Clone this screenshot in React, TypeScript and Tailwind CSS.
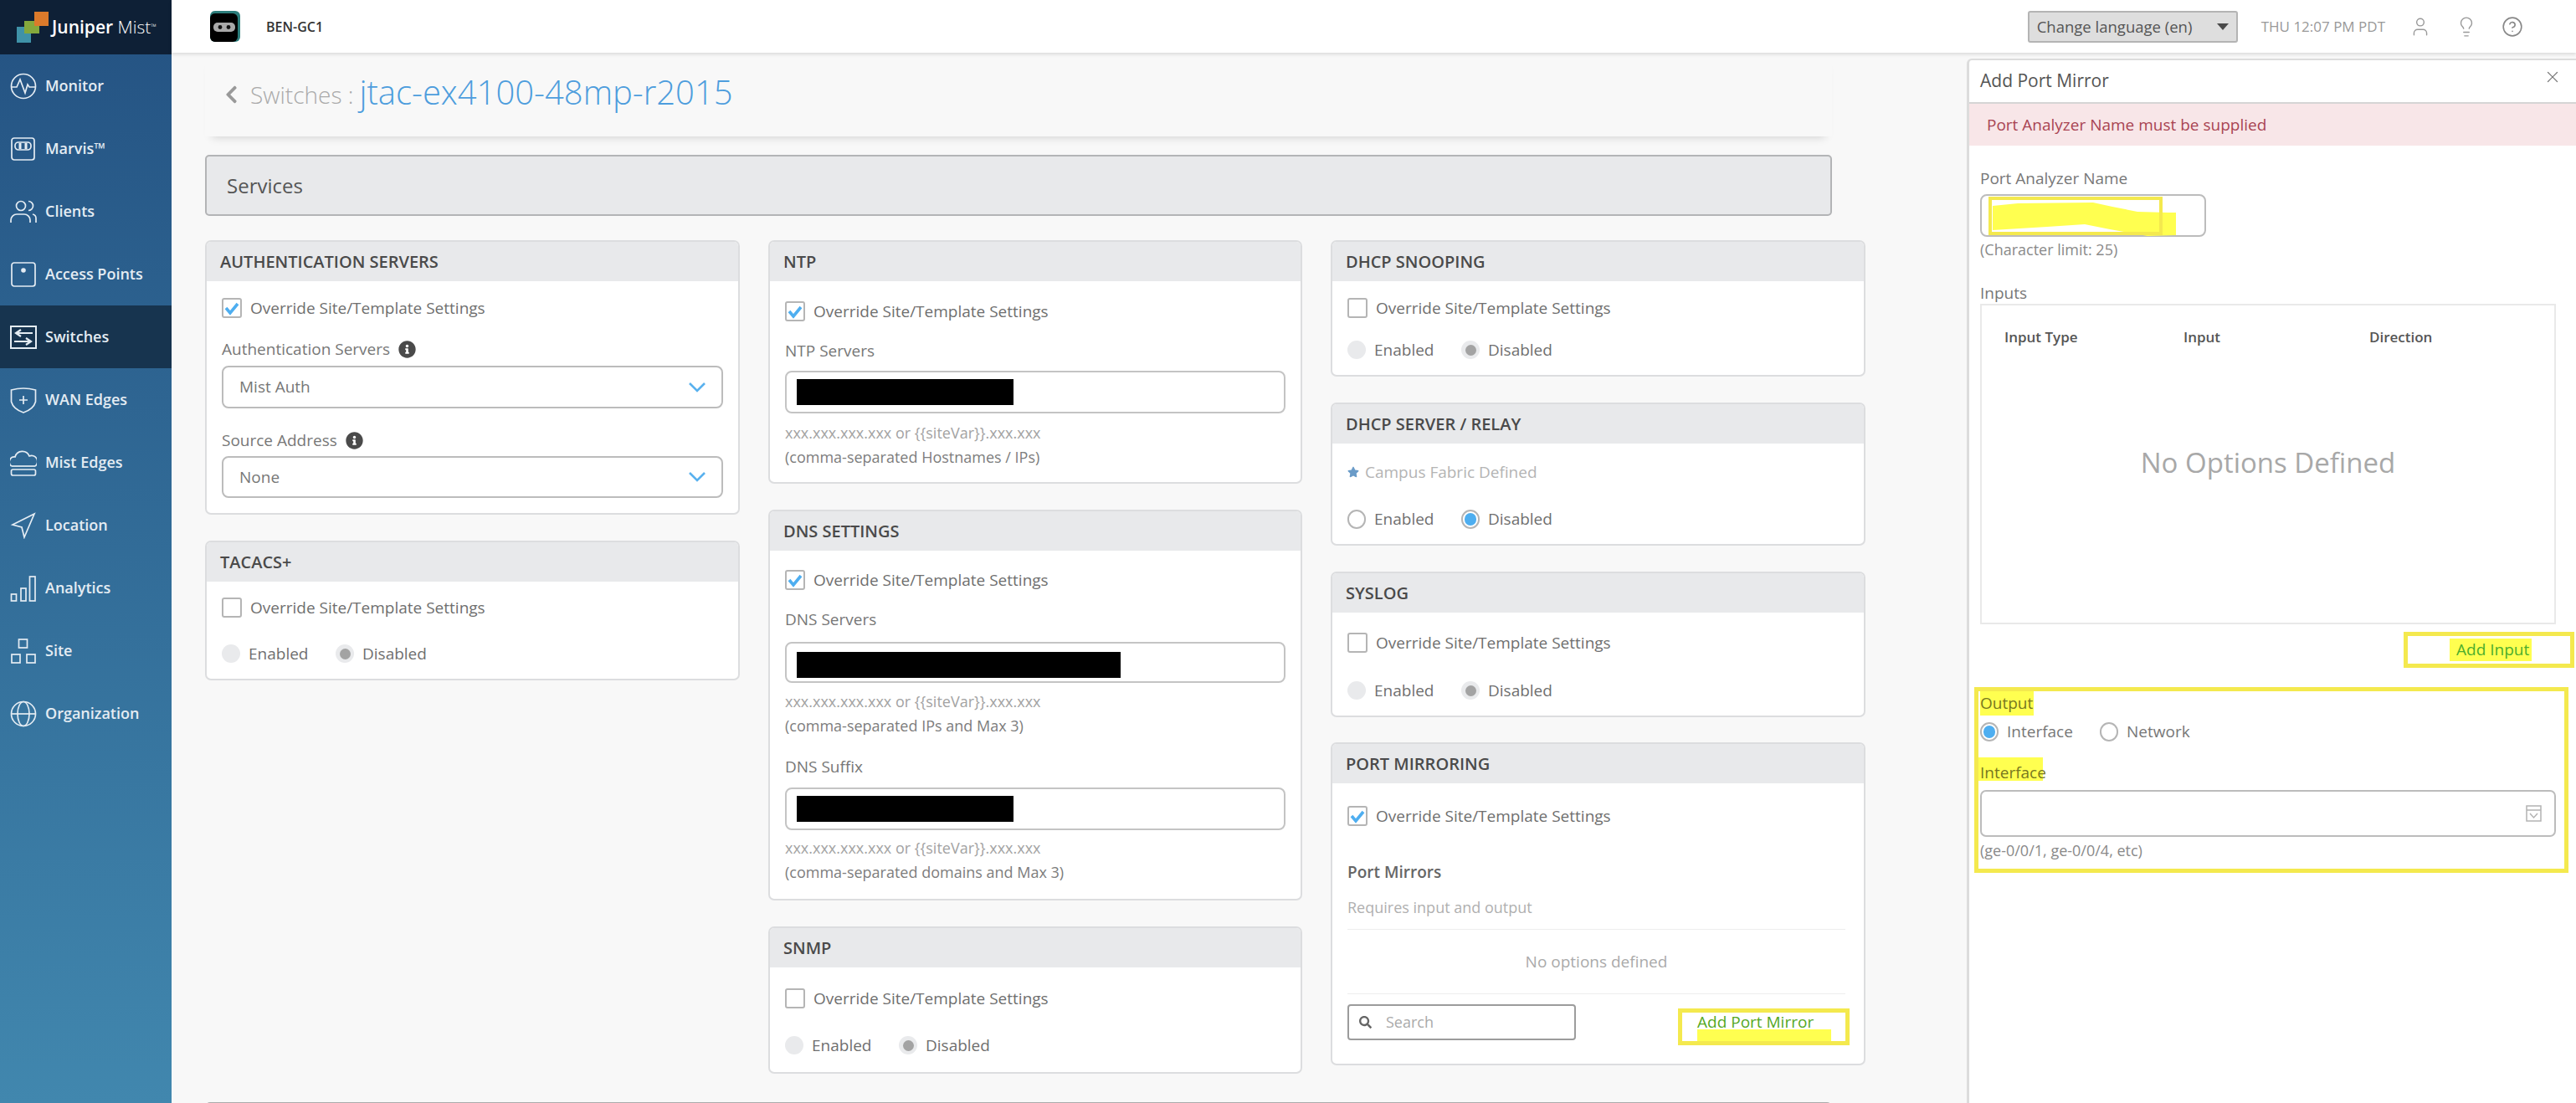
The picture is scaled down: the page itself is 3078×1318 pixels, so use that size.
import React from 'react';
import { FaInfoCircle, FaChevronLeft, FaSearch, FaStar } from 'react-icons/fa';
import { User, Lightbulb, CircleHelp, X } from 'lucide-react';

const NavIcon = ({ children }: { children: React.ReactNode }) => (
  <svg viewBox="0 0 32 32" fill="none" stroke="currentColor" strokeWidth="1.7" className="h-[32px] w-[32px] shrink-0">
    {children}
  </svg>
);

const navItems = [
  {
    name: 'Monitor',
    icon: (
      <NavIcon>
        <circle cx="16" cy="16" r="14.5" />
        <polyline points="2,17 8,17 12,8 18,24 21,14 23,17 30,17" />
      </NavIcon>
    ),
  },
  {
    name: 'Marvis™',
    icon: (
      <NavIcon>
        <rect x="2" y="3" width="27" height="26" rx="3" />
        <rect x="6" y="8" width="19" height="9" rx="4" />
        <line x1="12" y1="9" x2="12" y2="16" strokeWidth="3" />
        <line x1="19" y1="9" x2="19" y2="16" strokeWidth="3" />
      </NavIcon>
    ),
  },
  {
    name: 'Clients',
    icon: (
      <NavIcon>
        <circle cx="13" cy="9" r="5.5" />
        <path d="M1 29v-3a7 7 0 0 1 7-7h9a7 7 0 0 1 7 7v3" />
        <path d="M22 3.5a5.5 5.5 0 0 1 0 11" />
        <path d="M27 19a5 5 0 0 1 4 5v5" />
      </NavIcon>
    ),
  },
  {
    name: 'Access Points',
    icon: (
      <NavIcon>
        <rect x="2" y="2" width="28" height="28" rx="3" />
        <circle cx="16" cy="11" r="2.8" fill="currentColor" stroke="none" />
      </NavIcon>
    ),
  },
  {
    name: 'Switches',
    icon: (
      <NavIcon>
        <rect x="1" y="3" width="30" height="26" strokeWidth="2" />
        <path d="M27 11H7M13 7l-6 4 6 4" strokeWidth="2.2" />
        <path d="M5 21h20M19 17l6 4-6 4" strokeWidth="2.2" />
      </NavIcon>
    ),
  },
  {
    name: 'WAN Edges',
    icon: (
      <NavIcon>
        <path d="M1.5 4Q16 0 30.5 4V18Q28 27 16 31Q4 27 1.5 18Z" />
        <path d="M16 11v10M11 16h10" />
      </NavIcon>
    ),
  },
  {
    name: 'Mist Edges',
    icon: (
      <NavIcon>
        <path d="M2 20a6 6 0 0 1 4-11a9 9 0 0 1 17-1a7 7 0 0 1 7 12" />
        <line x1="2" y1="20" x2="30" y2="20" />
        <rect x="1.5" y="24" width="29" height="7" rx="2" />
      </NavIcon>
    ),
  },
  {
    name: 'Location',
    icon: (
      <NavIcon>
        <polygon points="29,2 3,15 14,18 17,30" />
      </NavIcon>
    ),
  },
  {
    name: 'Analytics',
    icon: (
      <NavIcon>
        <rect x="1.5" y="23" width="6" height="8" />
        <rect x="13" y="16" width="6" height="15" />
        <rect x="23.5" y="2" width="6.5" height="29" />
      </NavIcon>
    ),
  },
  {
    name: 'Site',
    icon: (
      <NavIcon>
        <rect x="10.5" y="2" width="10" height="10" />
        <rect x="2" y="20" width="10" height="10" />
        <rect x="20" y="20" width="10" height="10" />
      </NavIcon>
    ),
  },
  {
    name: 'Organization',
    icon: (
      <NavIcon>
        <circle cx="16" cy="16" r="14.5" />
        <ellipse cx="16" cy="16" rx="7" ry="14.5" />
        <line x1="1.5" y1="16" x2="30.5" y2="16" />
      </NavIcon>
    ),
  },
];

const Card = ({ title, className, bodyClass, children }: { title: string; className?: string; bodyClass: string; children: React.ReactNode }) => (
  <section className={`rounded-[7px] border-2 border-[#dcdddf] bg-white overflow-hidden ${className ?? ''}`}>
    <div className="h-[47px] bg-[#e8e9eb] pl-[16px] flex items-center text-[20px] font-semibold text-[#4a4a4a]">{title}</div>
    <div className={`px-[18px] ${bodyClass}`}>{children}</div>
  </section>
);

const Override = ({ checked }: { checked?: boolean }) => (
  <div className="flex items-center h-[24px] text-[19px] text-[#6f6f6f]">
    <span className="w-[24px] h-[24px] rounded-[3px] border-2 border-[#b5b5b5] bg-white mr-[10px] flex items-center justify-center shrink-0">
      {checked && (
        <svg viewBox="0 0 20 20" className="w-[20px] h-[20px]">
          <path d="M3 10l5 6 9-11" fill="none" stroke="#4eaef0" strokeWidth="3.6" />
        </svg>
      )}
    </span>
    Override Site/Template Settings
  </div>
);

// state: off = greyed out, offOn = greyed out and selected, blank / on = live radio
const Dot = ({ state }: { state: 'off' | 'offOn' | 'blank' | 'on' }) => {
  if (state === 'off') return <span className="w-[22px] h-[22px] rounded-full bg-[#e9eaec] shrink-0" />;
  if (state === 'offOn')
    return (
      <span className="w-[22px] h-[22px] rounded-full bg-[#e9eaec] flex items-center justify-center shrink-0">
        <span className="w-[13px] h-[13px] rounded-full bg-[#a3a3a3]" />
      </span>
    );
  return (
    <span className="w-[22px] h-[23px] rounded-full border-2 border-[#b5b5b5] bg-white flex items-center justify-center shrink-0">
      {state === 'on' && <span className="w-[14px] h-[15px] rounded-full bg-[#4eaef0]" />}
    </span>
  );
};

const RadioPair = ({ first, second, className }: { first: 'off' | 'blank'; second: 'offOn' | 'on'; className?: string }) => (
  <div className={`flex items-center h-[24px] text-[19px] text-[#6f6f6f] ${className ?? ''}`}>
    <Dot state={first} />
    <span className="ml-[10px] w-[104px]">Enabled</span>
    <Dot state={second} />
    <span className="ml-[10px]">Disabled</span>
  </div>
);

const Label = ({ children, className }: { children: React.ReactNode; className?: string }) => (
  <div className={`flex items-center h-[24px] text-[19px] text-[#777] ${className ?? ''}`}>{children}</div>
);

const Select = ({ value, className }: { value: string; className?: string }) => (
  <div className={`flex items-center justify-between rounded-[8px] border-2 border-[#bcbcbc] pl-[19px] pr-[19px] text-[19px] text-[#777] ${className ?? ''}`}>
    {value}
    <svg viewBox="0 0 20 12" className="w-[20px] h-[12px]">
      <path d="M1 1l9 9 9-9" fill="none" stroke="#59b1ee" strokeWidth="2.6" />
    </svg>
  </div>
);

const Redacted = ({ className, barClass }: { className: string; barClass: string }) => (
  <div className={`flex items-center rounded-[8px] border-2 border-[#c4c4c4] pl-[12px] ${className}`}>
    <div className={`bg-black ${barClass}`} />
  </div>
);

const Hint = ({ first, second, className }: { first: string; second: string; className?: string }) => (
  <div className={`text-[18px] leading-[29px] ${className ?? ''}`}>
    <div className="text-[#a3a3a3]">{first}</div>
    <div className="text-[#7d7d7d]">{second}</div>
  </div>
);

const Info = () => <FaInfoCircle className="ml-[10px] w-[21px] h-[21px] text-[#4a4a4a]" />;

const RobotIcon = () => (
  <svg viewBox="0 0 38 38" className="w-[38px] h-[38px]">
    <rect x="1" y="0" width="36" height="37" rx="6" fill="#2c7d7b" />
    <rect x="1" y="3" width="33" height="34" rx="6" fill="#000" />
    <rect x="5" y="14" width="26" height="11" rx="5" fill="#a9a9a9" />
    <circle cx="13" cy="19.5" r="2.4" fill="#111" />
    <circle cx="23" cy="19.5" r="2.4" fill="#111" />
  </svg>
);

const JuniperLogo = () => (
  <svg viewBox="0 0 38 37" className="w-[38px] h-[37px] shrink-0">
    <rect x="0" y="18" width="17" height="19" fill="#3f92a8" />
    <rect x="9" y="11" width="18" height="15" fill="#84a83c" />
    <rect x="21" y="0" width="17" height="17" fill="#db7a2b" />
  </svg>
);

const InterfaceIcon = () => (
  <svg viewBox="0 0 19 20" className="absolute right-[15px] top-[16px] w-[19px] h-[20px]" fill="none" stroke="#b3b3b3" strokeWidth="1.5">
    <rect x="1" y="1" width="17" height="18" />
    <path d="M1 6h17M5 10l4.500 5 4.500-5" />
  </svg>
);

export default function App() {
  return (
    <div className="relative flex w-[3078px] h-[1318px] overflow-hidden bg-[#f8f8f8] font-['Open_Sans',sans-serif]">
      {/* Sidebar */}
      <aside className="w-[205px] shrink-0 flex flex-col bg-gradient-to-b from-[#245282] to-[#4187ae]">
        <div className="h-[65px] bg-[#0e2036] flex items-center pl-[20px]">
          <JuniperLogo />
          <span className="ml-[4px] text-[21px] text-white whitespace-nowrap">
            <span className="font-semibold">Juniper</span> <span className="font-light">Mist</span>
            <sup className="text-[9px] font-light">™</sup>
          </span>
        </div>
        <nav>
          {navItems.map((item) => (
            <div
              key={item.name}
              className={`flex items-center h-[75px] pl-[12px] gap-[10px] text-[18px] font-semibold text-[#e4ecf3] ${item.name === 'Switches' ? 'bg-[#17344f]' : ''}`}
            >
              {item.icon}
              <span>{item.name}</span>
            </div>
          ))}
        </nav>
      </aside>

      <div className="flex-1 min-w-0">
        {/* Top bar */}
        <header className="h-[63px] bg-white flex items-center pl-[45px] pr-[63px] shadow-[0_2px_4px_rgba(0,0,0,0.12)] relative">
          <RobotIcon />
          <span className="ml-[30px] text-[16px] font-semibold text-[#333]">BEN-GC1</span>
          <div className="ml-auto w-[251px] h-[38px] rounded-[3px] border-2 border-[#b4b4b4] bg-[#dedede] flex items-center justify-between pl-[9px] pr-[9px] text-[18.5px] text-[#555]">
            Change language (en)
            <span className="w-0 h-0 border-x-[7px] border-x-transparent border-t-[8px] border-t-[#4a4a4a]" />
          </div>
          <span className="ml-[28px] text-[17px] text-[#999] whitespace-nowrap">THU 12:07 PM PDT</span>
          <User className="ml-[29px] w-[26px] h-[30px] text-[#999]" strokeWidth={1.3} />
          <Lightbulb className="ml-[29px] w-[26px] h-[30px] text-[#999]" strokeWidth={1.3} />
          <CircleHelp className="ml-[29px] w-[26px] h-[30px] text-[#888]" strokeWidth={1.5} />
        </header>

        <main className="px-[40px] w-[2024px]">
          {/* Title */}
          <div className="h-[100px] flex items-center pl-[23px] shadow-[0_9px_10px_-8px_rgba(0,0,0,0.16)]">
            <FaChevronLeft className="w-[17px] h-[24px] text-[#999]" />
            <span className="ml-[14px] text-[28px] font-light text-[#aaa]">Switches :</span>
            <span className="ml-[7px] text-[40px] font-light text-[#4d9ddd] -mt-[6px]">jtac-ex4100-48mp-r2015</span>
          </div>

          <div className="mt-[22px] h-[73px] rounded-[5px] border-2 border-[#b3b4b6] bg-[#e8e9eb] flex items-center pl-[24px] text-[24px] text-[#555]">
            Services
          </div>

          <div className="mt-[29px] grid grid-cols-[639px_638px_639px] gap-x-[34px] items-start">
            <div>
              <Card title="AUTHENTICATION SERVERS" bodyClass="pt-[20px] pb-[18px]">
                <Override checked />
                <Label className="mt-[25px]">
                  Authentication Servers
                  <Info />
                </Label>
                <Select value="Mist Auth" className="mt-[8px] h-[51px]" />
                <Label className="mt-[26px]">
                  Source Address
                  <Info />
                </Label>
                <Select value="None" className="mt-[7px] h-[50px]" />
              </Card>
              <Card title="TACACS+" className="mt-[31px]" bodyClass="pt-[19px] pb-[18px]">
                <Override />
                <RadioPair first="off" second="offOn" className="mt-[31px]" />
              </Card>
            </div>

            <div>
              <Card title="NTP" bodyClass="pt-[24px] pb-[15px]">
                <Override checked />
                <Label className="mt-[23px]">NTP Servers</Label>
                <Redacted className="mt-[12px] h-[51px]" barClass="w-[259px] h-[31px]" />
                <Hint first="xxx.xxx.xxx.xxx or {{siteVar}}.xxx.xxx" second="(comma-separated Hostnames / IPs)" className="mt-[9px]" />
              </Card>
              <Card title="DNS SETTINGS" className="mt-[31px]" bodyClass="pt-[23px] pb-[17px]">
                <Override checked />
                <Label className="mt-[23px]">DNS Servers</Label>
                <Redacted className="mt-[15px] h-[49px]" barClass="w-[387px] h-[31px] mt-[5px]" />
                <Hint first="xxx.xxx.xxx.xxx or {{siteVar}}.xxx.xxx" second="(comma-separated IPs and Max 3)" className="mt-[8px]" />
                <Label className="mt-[22px]">DNS Suffix</Label>
                <Redacted className="mt-[13px] h-[51px]" barClass="w-[259px] h-[31px]" />
                <Hint first="xxx.xxx.xxx.xxx or {{siteVar}}.xxx.xxx" second="(comma-separated domains and Max 3)" className="mt-[7px]" />
              </Card>
              <Card title="SNMP" className="mt-[31px]" bodyClass="pt-[25px] pb-[20px]">
                <Override />
                <RadioPair first="off" second="offOn" className="mt-[32px]" />
              </Card>
            </div>

            <div>
              <Card title="DHCP SNOOPING" bodyClass="pt-[20px] pb-[18px]">
                <Override />
                <RadioPair first="off" second="offOn" className="mt-[26px]" />
              </Card>
              <Card title="DHCP SERVER / RELAY" className="mt-[31px]" bodyClass="pt-[22px] pb-[18px]">
                <div className="flex items-center h-[24px] text-[19px] text-[#b4b4b4]">
                  <FaStar className="w-[14px] h-[14px] text-[#6a9bc8] mr-[7px]" />
                  Campus Fabric Defined
                </div>
                <RadioPair first="blank" second="on" className="mt-[32px]" />
              </Card>
              <Card title="SYSLOG" className="mt-[31px]" bodyClass="pt-[24px] pb-[18px]">
                <Override />
                <RadioPair first="off" second="offOn" className="mt-[33px]" />
              </Card>
              <Card title="PORT MIRRORING" className="mt-[30px]" bodyClass="pt-[27px] pb-[22px]">
                <Override checked />
                <div className="mt-[43px] h-[24px] flex items-center text-[19px] font-semibold text-[#666]">Port Mirrors</div>
                <div className="mt-[18px] h-[24px] flex items-center text-[18px] text-[#b0b0b0]">Requires input and output</div>
                <div className="mt-[14px] h-[78px] border-y border-[#eeeeee] flex items-center justify-center text-[19px] text-[#aaa] mr-[4px]">
                  No options defined
                </div>
                <div className="mt-[12px] flex items-start justify-between">
                  <div className="w-[273px] h-[43px] rounded-[4px] border-2 border-[#9c9c9c] flex items-center pl-[12px] text-[18px] text-[#aaa]">
                    <FaSearch className="w-[15px] h-[15px] text-[#666] mr-[17px]" />
                    Search
                  </div>
                  <div className="mt-[5px] -mr-[1px] w-[205px] h-[44px] border-[5px] border-[#f4e94e] pl-[18px] relative">
                    <span className="absolute left-[18px] top-[20px] w-[160px] h-[14px] bg-[#ffff50]" />
                    <span className="relative block -mt-[3px] text-[19px] text-[#55a822] whitespace-nowrap">Add Port Mirror</span>
                  </div>
                </div>
              </Card>
            </div>
          </div>

          <div className="mt-[34px] h-[10px] rounded-t-[6px] border-2 border-[#aaa] bg-[#e8e9eb]" />
        </main>
      </div>

      {/* Add Port Mirror drawer */}
      <aside className="absolute left-[2350px] top-[70px] w-[728px] h-[1248px] rounded-tl-[6px] border-l-[3px] border-t-2 border-[#dcdcdc] bg-white">
        <div className="relative h-[52px] border-b-2 border-[#d5d5d5] flex items-center pl-[13px] text-[21px] text-[#555]">
          Add Port Mirror
          <X className="absolute right-[17px] top-[9px] w-[22px] h-[22px] text-[#777]" strokeWidth={1.3} />
        </div>
        <div className="h-[50px] bg-[#f8e6e8] flex items-center pl-[21px] text-[19px] text-[#a94452]">Port Analyzer Name must be supplied</div>

        <div className="pl-[13px] pr-[24px]">
          <Label className="mt-[27px]">Port Analyzer Name</Label>
          <div className="relative mt-[7px] w-[270px] h-[51px] rounded-[8px] border-2 border-[#bcbcbc]">
            <svg viewBox="0 0 226 50" className="absolute left-[8px] top-[0px] w-[226px] h-[50px] overflow-visible">
              <path d="M5 12L35 9L125 8L148 13L178 19L214 20L224 20L224 47L190 48L145 40L115 34L70 37L5 41Z" fill="#ffff50" />
              <rect x="2" y="3" width="204" height="42" fill="none" stroke="#f4e94e" strokeWidth="4" />
            </svg>
          </div>
          <Label className="mt-[3px] !text-[#8a8a8a] !text-[18px]">(Character limit: 25)</Label>
          <Label className="mt-[28px]">Inputs</Label>

          <div className="mt-[1px] h-[383px] border-2 border-[#e9e9e9] flex flex-col">
            <div className="mt-[26px] pl-[27px] h-[24px] flex items-center text-[17px] font-semibold text-[#555]">
              <span className="w-[214px]">Input Type</span>
              <span className="w-[222px]">Input</span>
              <span>Direction</span>
            </div>
            <div className="flex-1 pb-[54px] flex items-center justify-center text-[33px] text-[#a8a8a8]">No Options Defined</div>
          </div>

          <div className="mt-[9px] -mr-[22px] ml-auto w-[204px] h-[43px] border-[5px] border-[#f4e94e] pl-[50px] flex items-center">
            <span className="w-[98px] h-[27px] bg-[#ffff50] pl-[8px] flex items-center text-[19px] text-[#4cae2c] whitespace-nowrap">Add Input</span>
          </div>

          <div className="mt-[23px] -ml-[7px] -mr-[15px] border-[5px] border-[#f4e94e] pl-[2px] pr-[10px] pb-[10px]">
            <div className="w-[64px] h-[29px] bg-[#ffff50] text-[19px] leading-[29px] text-[#77771f]">Output</div>
            <div className="mt-[7px] flex items-center h-[24px] text-[19px] text-[#777]">
              <Dot state="on" />
              <span className="ml-[10px] w-[111px]">Interface</span>
              <Dot state="blank" />
              <span className="ml-[10px]">Network</span>
            </div>
            <div className="mt-[19px] -ml-[2px] w-[77px] h-[28px] bg-[#ffff50] pl-[2px] text-[19px] leading-[36px] text-[#77771f] overflow-visible">Interface</div>
            <div className="relative mt-[11px] h-[56px] rounded-[7px] border-2 border-[#bcbcbc]">
              <InterfaceIcon />
            </div>
            <Label className="mt-[4px] !text-[#8a8a8a] !text-[18px]">(ge-0/0/1, ge-0/0/4, etc)</Label>
          </div>
        </div>
      </aside>
    </div>
  );
}
